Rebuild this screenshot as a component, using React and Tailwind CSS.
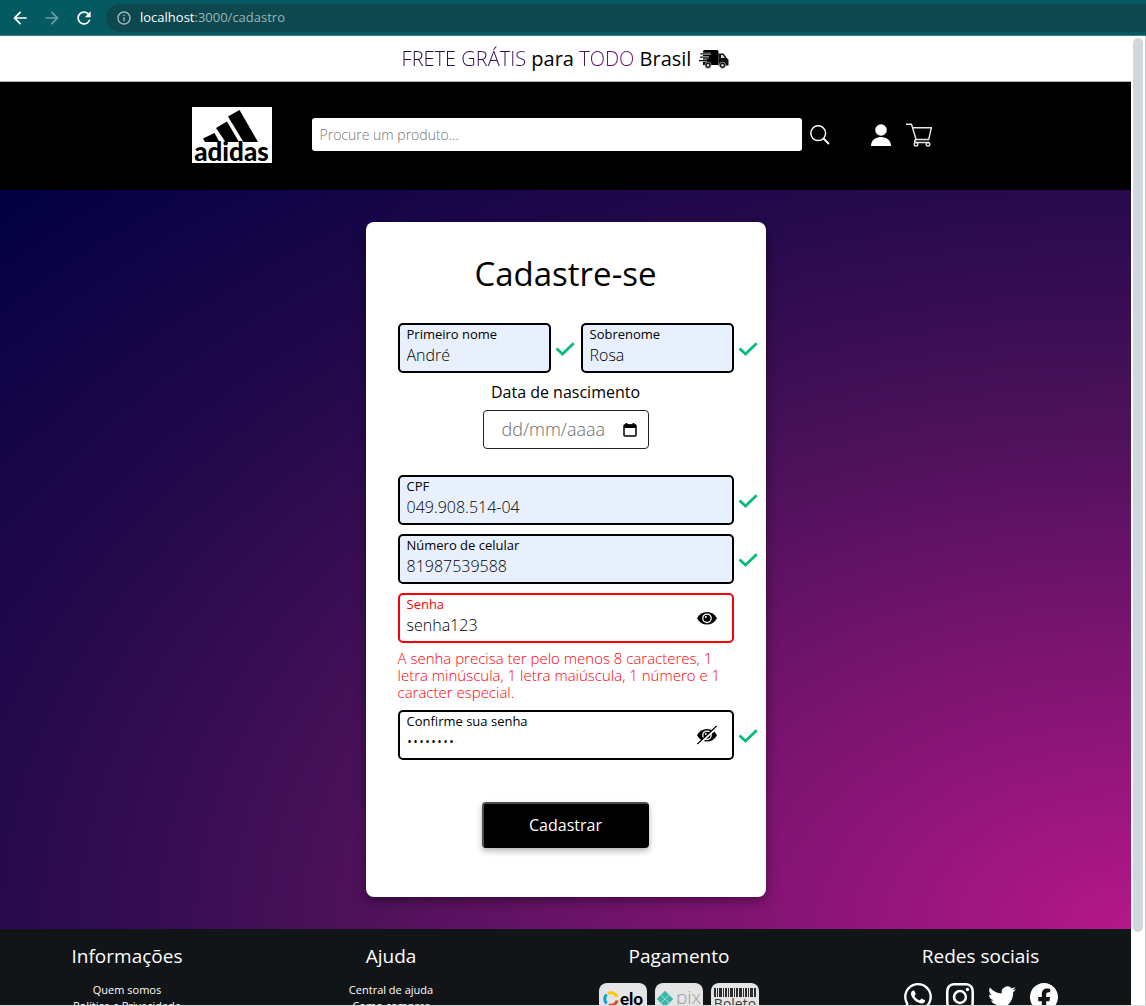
import { BsWhatsapp, BsInstagram, BsTwitter, BsFacebook } from "react-icons/bs";
import { MdArrowBack, MdArrowForward, MdRefresh, MdInfoOutline } from "react-icons/md";

function Truck() {
  return (
    <svg viewBox="0 0 30 20" className="h-5 w-[30px]" aria-hidden="true">
      <path d="M4 2.500Q4 1 5.500 1H18q1.500 0 1.500 1.500V16H4Z" fill="#000" />
      <path d="M19.500 4.500h5l3.500 4.700 1.500 1.300V16.500h-10Z" fill="#111" />
      <path d="M22 6h1.900l1.900 3h-3.800Z" fill="#ddd" />
      <path d="M1.500 4.800h10M1 8.200h9M0 11.600h8" stroke="#fff" strokeWidth="2.200" />
      <path d="M1.500 4.800h10M1 8.200h9M0 11.600h8" stroke="#111" strokeWidth="1.200" />
      <circle cx="9" cy="16.200" r="3.100" fill="#111" stroke="#ccc" strokeWidth=".6" />
      <circle cx="9" cy="16.200" r="1.200" fill="#ddd" />
      <circle cx="23.500" cy="16.200" r="3.100" fill="#111" stroke="#ccc" strokeWidth=".6" />
      <circle cx="23.500" cy="16.200" r="1.200" fill="#ddd" />
    </svg>
  );
}

function Logo() {
  return (
    <a href="#inicio" aria-label="adidas" className="flex h-14 w-20 flex-col items-center bg-white text-black">
      <svg viewBox="0 0 80 36" className="h-9 w-20 shrink-0" aria-hidden="true">
        <path d="M36 9.500 47.500 3 66 35H51.500Z" />
        <path d="M24 21 35 14.500 47 35H33.500L24 21Z" />
        <path d="M11 31.500 22.500 26 27.500 35H13Z" />
      </svg>
      <span className="font-['Lato',sans-serif] text-[26px] leading-4 font-black">adidas</span>
    </a>
  );
}

function SearchIcon() {
  return (
    <svg viewBox="0 0 20 20" className="size-5" fill="none" stroke="#fff" strokeWidth="1.500" aria-hidden="true">
      <circle cx="8.200" cy="8.200" r="7.400" />
      <path d="m13.500 13.500 5.500 5.500" strokeWidth="1.800" />
    </svg>
  );
}

function UserIcon() {
  return (
    <svg viewBox="0 0 20 22" className="h-[22px] w-5" fill="#fff" aria-hidden="true">
      <circle cx="10" cy="6" r="5.800" />
      <path d="M0 22C0 16.500 4 13 10 13s10 3.500 10 9Z" />
    </svg>
  );
}

function CartIcon() {
  return (
    <svg viewBox="0 0 26 24" className="h-6 w-[26px]" fill="none" stroke="#e8e8e8" strokeWidth="1.400" aria-hidden="true">
      <path d="M0 1.200h5.500l4.600 15.300h12.600L25.400 4.700H6.600" />
      <path d="M10.100 16.500c-2.200 1-2 3 0 3h13" />
      <circle cx="10" cy="21.300" r="1.800" />
      <circle cx="22" cy="21.300" r="1.800" />
    </svg>
  );
}

function Check() {
  return (
    <svg viewBox="0 0 20 14" className="absolute top-[19px] left-full ml-1 h-[14px] w-5" fill="none" stroke="#0abb7c" strokeWidth="2.800" role="img" aria-label="Válido">
      <path d="m1.500 6.500 6 5.500L18.700 1.200" />
    </svg>
  );
}

function Eye({ off }) {
  return (
    <svg viewBox="0 0 20 20" className="size-5" aria-hidden="true">
      <path d="M0 10.300C2.300 6 5.700 4 10 4s7.700 2 10 6.300C17.700 14.500 14.300 16.600 10 16.600S2.300 14.500 0 10.300Z" />
      <circle cx="10" cy="10.300" r="4.200" fill="none" stroke="#fff" strokeWidth="1.300" />
      <circle cx="8.900" cy="9" r="1" fill="#fff" />
      {off && <path d="M1.200 19.800 20.600 2" stroke="#fff" strokeWidth="2.200" />}
      {off && <path d="M.3 19 19.700 1" stroke="#000" strokeWidth="1.300" />}
    </svg>
  );
}

function Field({ id, label, type = "text", value, tone = "filled", valid, toggle }) {
  const box = {
    filled: "border-black bg-[#e8f0fe]",
    plain: "border-black bg-white",
    error: "border-[#fb0007] bg-white",
  }[tone];
  return (
    <div className="relative">
      <div className={"relative flex h-[50px] flex-col rounded-[5px] border-2 px-[7px] " + box}>
        <label htmlFor={id} className={"text-[13px] leading-[18px] " + (tone === "error" ? "text-[#fb0007]" : "text-black")}>
          {label}
        </label>
        <input id={id} type={type} defaultValue={value} className="w-full bg-transparent text-[16px] leading-6 font-light text-black outline-none" />
        {toggle && (
          <button type="button" aria-label={toggle === "off" ? "Mostrar senha" : "Ocultar senha"} className="absolute top-[13px] right-[15px]">
            <Eye off={toggle === "off"} />
          </button>
        )}
      </div>
      {valid && <Check />}
    </div>
  );
}

function FooterColumn({ title, children }) {
  return (
    <div className="flex flex-col items-center">
      <h2 className="text-[19px] leading-[26px] font-medium">{title}</h2>
      {children}
    </div>
  );
}

function Links({ items }) {
  return (
    <ul className="mt-[13px] text-center text-[11px] leading-4">
      {items.map((item) => (
        <li key={item}>
          <a href="#rodape">{item}</a>
        </li>
      ))}
    </ul>
  );
}

export default function App() {
  return (
    <div className="flex h-screen flex-col overflow-hidden border-b border-[#dcdcdc] font-['Open_Sans',sans-serif] text-black">
      <div className="flex h-9 shrink-0 items-center border-b border-[#3a7b80] bg-[#045a60] text-white">
        <div className="flex items-center gap-3 pl-[10px]">
          <button type="button" aria-label="Voltar"><MdArrowBack className="size-5" /></button>
          <button type="button" aria-label="Avançar" className="text-[#6a9fa3]"><MdArrowForward className="size-5" /></button>
          <button type="button" aria-label="Recarregar"><MdRefresh className="size-5" /></button>
        </div>
        <div className="ml-3 flex h-7 flex-1 items-center gap-2 rounded-l-full bg-[#0d484f] pl-[10px]">
          <MdInfoOutline className="size-4 text-[#a9bcbf]" />
          <span className="text-[13px] text-[#9db4b7]"><span className="text-white">localhost</span>:3000/cadastro</span>
        </div>
      </div>

      <div className="flex min-h-0 flex-1">
        <div className="min-w-0 flex-1 overflow-hidden">
          <div className="flex h-[46px] items-center justify-center gap-2 border-b border-[#b5b5b5] bg-white">
            <p className="text-[20px]">
              <span className="bg-linear-to-r from-[#1c0a4b] to-[#41105c] bg-clip-text font-light text-transparent">FRETE GRÁTIS</span> para{" "}
              <span className="bg-linear-to-r from-[#4a1159] to-[#86157a] bg-clip-text font-light text-transparent">TODO</span> Brasil
            </p>
            <Truck />
          </div>

          <header className="flex h-[108px] items-center justify-center bg-black pb-[3px]">
            <div className="flex w-[748px] items-center">
              <Logo />
              <form className="ml-10 flex flex-1 items-center gap-2">
                <input type="search" aria-label="Procure um produto" placeholder="Procure um produto..." className="h-[33px] w-[490px] rounded-[3px] bg-white px-2 text-[14px] font-light placeholder:text-[#757575]" />
                <button type="button" aria-label="Buscar"><SearchIcon /></button>
              </form>
              <a href="#conta" aria-label="Conta"><UserIcon /></a>
              <a href="#carrinho" aria-label="Carrinho" className="mr-2 ml-[15px]"><CartIcon /></a>
            </div>
          </header>

          <main className="flex justify-center bg-[radial-gradient(ellipse_at_bottom_right,#b5178a_0%,#4a1159_50%,#270a4c_70%,#010042_100%)] py-8">
            <form className="flex w-[400px] flex-col items-center rounded-lg bg-white px-8 pt-[29px] pb-[49px] shadow-[0_4px_12px_rgba(0,0,0,0.4)]">
              <h1 className="text-[33px] leading-[46px]">Cadastre-se</h1>

              <div className="mt-[26px] grid w-full grid-cols-2 gap-[30px]">
                <Field id="nome" label="Primeiro nome" value="André" valid />
                <Field id="sobrenome" label="Sobrenome" value="Rosa" valid />
              </div>

              <label htmlFor="nascimento" className="mt-[7px] text-[16px] leading-6">Data de nascimento</label>
              <div className="mt-[6px] flex h-[39px] w-[166px] items-center rounded-[4px] border border-[#222] pr-[11px] pl-[18px]">
                <input id="nascimento" type="text" placeholder="dd/mm/aaaa" className="w-full min-w-0 text-[18px] font-light outline-none placeholder:text-[#6b6b6b]" />
                <svg viewBox="0 0 14 16" className="h-4 w-[14px] shrink-0" aria-hidden="true">
                  <path d="M3.500 1v2M10.500 1v2" stroke="#000" strokeWidth="1.800" />
                  <rect x="1" y="3" width="12" height="11" rx="1" fill="none" stroke="#000" strokeWidth="1.500" />
                  <path d="M1 2.500h12V6H1Z" />
                </svg>
              </div>

              <div className="mt-[26px] flex w-full flex-col gap-[9px]">
                <Field id="cpf" label="CPF" value="049.908.514-04" valid />
                <Field id="celular" label="Número de celular" value="81987539588" valid />
                <Field id="senha" label="Senha" value="senha123" tone="error" toggle="on" />
                <p className="-mt-0.5 text-[15px] leading-[17px] font-light text-[#fb0007]">
                  A senha precisa ter pelo menos 8 caracteres, 1 letra minúscula, 1 letra maiúscula, 1 número e 1 caracter especial.
                </p>
                <Field id="confirma" type="password" label="Confirme sua senha" value="senha123" tone="plain" toggle="off" valid />
              </div>

              <button type="button" className="mt-[42px] h-[46px] w-[167px] rounded-[4px] border-2 border-t-[#4c4c4c] border-r-black border-b-black border-l-[#4c4c4c] bg-black text-[16px] text-white shadow-[0_3px_6px_rgba(0,0,0,0.3)]">
                Cadastrar
              </button>
            </form>
          </main>

          <footer className="grid grid-cols-[254fr_274fr_302fr_301fr] bg-[#111518] pt-[14px] text-white">
            <FooterColumn title="Informações"><Links items={["Quem somos", "Política e Privacidade"]} /></FooterColumn>
            <FooterColumn title="Ajuda"><Links items={["Central de ajuda", "Como comprar"]} /></FooterColumn>
            <FooterColumn title="Pagamento">
              <div className="mt-[14px] flex gap-2">
                <div className="flex h-8 w-12 items-center justify-center gap-px rounded-lg bg-[#e5e5e5] text-black">
                  <svg viewBox="0 0 16 16" className="size-4" fill="none" strokeWidth="3" aria-hidden="true">
                    <path d="M5 2.400A6.300 6.300 0 0 1 14 6.200" stroke="#fdc800" />
                    <path d="M3.600 12.500A6.300 6.300 0 0 1 3.600 3.500" stroke="#00a4e0" />
                    <path d="M14.100 9.500A6.300 6.300 0 0 1 5.500 13.800" stroke="#ef4123" />
                  </svg>
                  <span className="font-['Lato',sans-serif] text-[17px] leading-4 font-black">elo</span>
                </div>
                <div className="flex h-8 w-12 items-center justify-center gap-[3px] overflow-hidden rounded-lg bg-[#e5e5e5] text-[#9b9b9b]">
                  <svg viewBox="0 0 16 16" className="size-4 shrink-0" fill="#37b8ab" aria-hidden="true">
                    <path d="m8 0 3.700 3.700L8 7.400 4.300 3.700ZM8 8.600l3.700 3.700L8 16l-3.700-3.700ZM3.700 4.300 7.400 8l-3.700 3.700L0 8ZM12.300 4.300 16 8l-3.700 3.700L8.600 8Z" stroke="#37b8ab" strokeWidth=".5" strokeLinejoin="round" />
                  </svg>
                  <span className="pb-1 text-[19px] leading-4 font-light">pix</span>
                </div>
                <div className="flex h-8 w-12 flex-col items-center rounded-lg bg-[#e5e5e5] pt-[5px] text-[#3a3a3a]">
                  <svg viewBox="0 0 42 9" className="h-[9px] w-[42px] shrink-0" fill="#2c2c2c" aria-hidden="true">
                    <path d="M0 0h2v9H0ZM3 0h1v9H3ZM5 0h3v9H5ZM9 0h1v9H9ZM11 0h2v9h-2ZM14 0h1v9h-1ZM16 0h3v9h-3ZM20 0h1v9h-1ZM22 0h2v9h-2ZM25 0h3v9h-3ZM29 0h1v9h-1ZM31 0h2v9h-2ZM34 0h1v9h-1ZM36 0h3v9h-3ZM40 0h2v9h-2Z" />
                  </svg>
                  <span className="text-[14px] leading-[14px]">Boleto</span>
                </div>
              </div>
            </FooterColumn>
            <FooterColumn title="Redes sociais">
              <div className="mt-[14px] flex gap-[14px]">
                <a href="#whatsapp" aria-label="WhatsApp"><BsWhatsapp className="size-7" /></a>
                <a href="#instagram" aria-label="Instagram"><BsInstagram className="size-7" /></a>
                <a href="#twitter" aria-label="Twitter"><BsTwitter className="size-7" /></a>
                <a href="#facebook" aria-label="Facebook"><BsFacebook className="size-7" /></a>
              </div>
            </FooterColumn>
          </footer>
        </div>
        <div className="w-[15px] shrink-0 border-r border-[#c8c8c8] bg-white pt-0.5 pl-0.5">
          <div className="h-[92.5%] w-[10px] rounded-full bg-[#d0d8df]" />
        </div>
      </div>
    </div>
  );
}
